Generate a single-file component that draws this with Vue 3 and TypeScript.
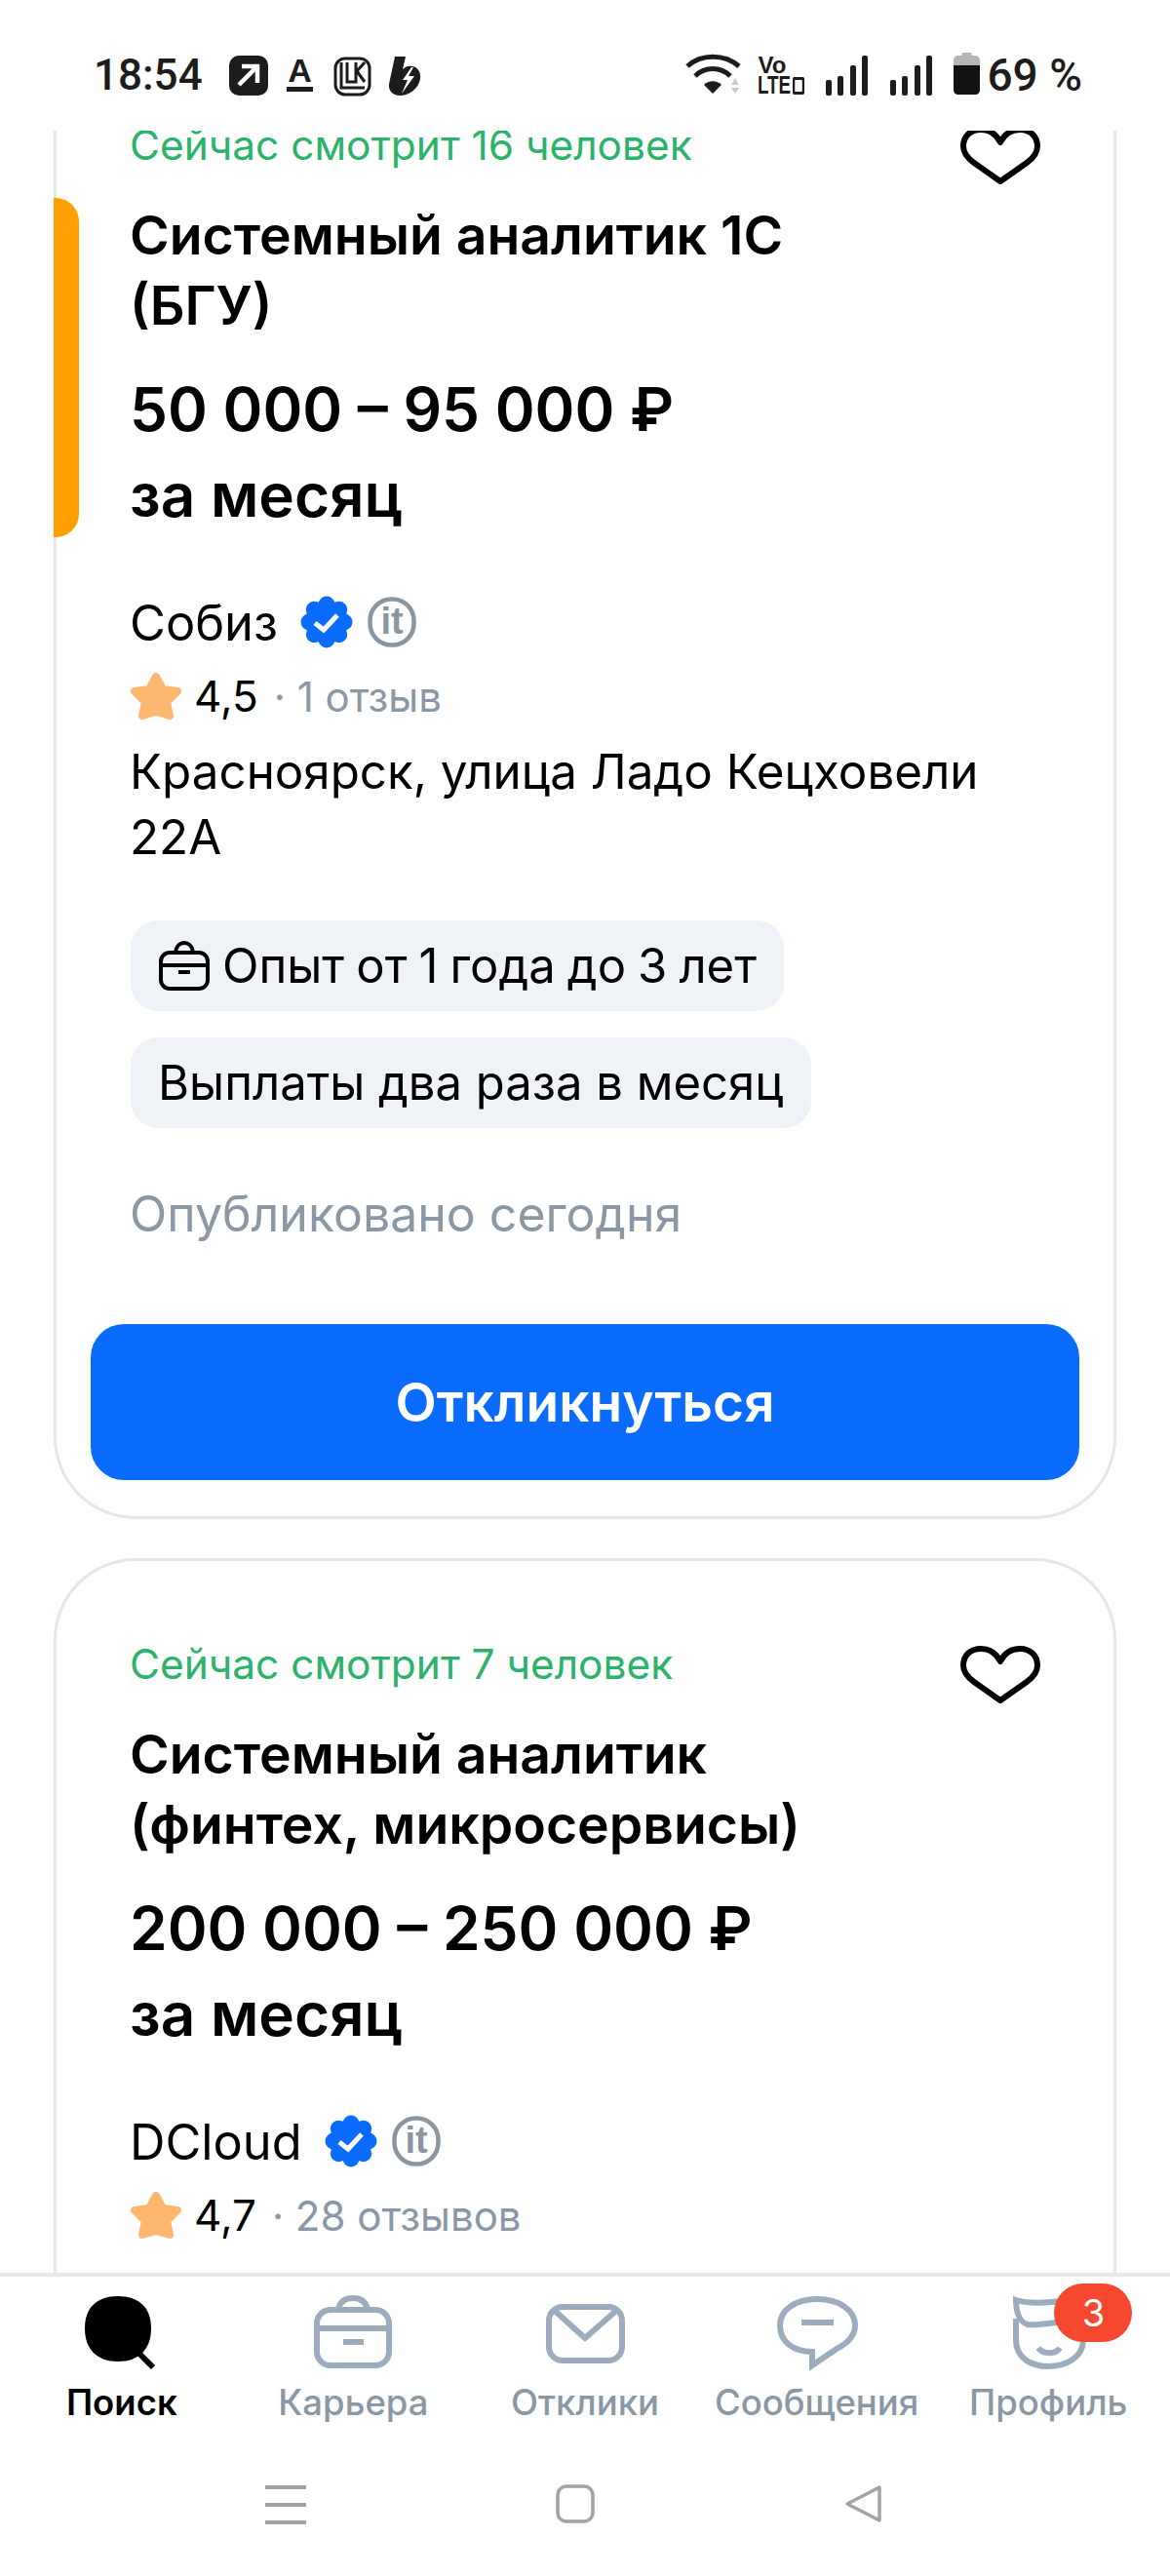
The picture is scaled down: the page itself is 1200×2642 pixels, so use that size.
<template>
  <div class="screen">
    <!-- статус-бар -->
    <header class="status-bar">
      <span class="time">18:54</span>
      <svg class="st-arrow" width="40" height="41" viewBox="0 0 40 41">
        <rect width="40" height="41" rx="10" fill="#1c1c1c" />
        <path d="M10 30 L28 12 M13 11 H29 V28" fill="none" stroke="#fff" stroke-width="4.5" />
      </svg>
      <span class="st-a">A</span>
      <svg class="st-luk" width="39" height="41" viewBox="0 0 39 41">
        <rect x="2" y="2" width="35" height="37" rx="10" fill="none" stroke="#1c1c1c" stroke-width="3" />
        <path d="M8 6 V32 H32 M14 6 V26 H23 V6 M23 16 L32 6 M24 15 L32 26" fill="none" stroke="#1c1c1c" stroke-width="3" />
      </svg>
      <svg class="st-b" width="34" height="41" viewBox="0 0 34 41">
        <path d="M7 0 H18 L15 13 C18 10 22 9 25 10 C31 11 34 17 33 23 C31 33 22 40 12 40 C5 40 0 35 1 28 Z" fill="#1c1c1c" />
        <path d="M24 11 L15 24 H20 L14 38 L27 20 H21 L26 11 Z" fill="#fff" />
      </svg>

      <div class="status-right">
        <svg width="60" height="44" viewBox="0 0 60 44">
          <path d="M2 14 C16 1 40 1 55 14 M10 24 C20 14 36 14 46 24" fill="none" stroke="#1c1c1c" stroke-width="5" />
          <path d="M19 33 C24 28 32 28 37 33 L28 42 Z" fill="#1c1c1c" />
          <path d="M47 33 L51 26 L55 33 Z M47 36 H55 L51 42 Z" fill="#c9c9c9" />
        </svg>
        <div class="st-volte">
          <span class="st-vo">Vo</span>
          <span class="st-lte">LTE<i class="st-lte-box"></i></span>
        </div>
        <svg class="st-signal" width="43" height="41" viewBox="0 0 43 41">
          <rect x="0" y="25" width="6" height="16" rx="2" fill="#1c1c1c" />
          <rect x="12" y="21" width="6" height="20" rx="2" fill="#1c1c1c" />
          <rect x="25" y="10" width="6" height="31" rx="2" fill="#1c1c1c" />
          <rect x="37" y="0" width="6" height="41" rx="2" fill="#1c1c1c" />
        </svg>
        <svg class="st-signal2" width="43" height="41" viewBox="0 0 43 41">
          <rect x="0" y="25" width="6" height="16" rx="2" fill="#1c1c1c" />
          <rect x="12" y="21" width="6" height="20" rx="2" fill="#1c1c1c" />
          <rect x="25" y="10" width="6" height="31" rx="2" fill="#1c1c1c" />
          <rect x="37" y="0" width="6" height="41" rx="2" fill="#1c1c1c" />
        </svg>
        <svg class="st-battery" width="27" height="43" viewBox="0 0 27 43">
          <path d="M9 0 H18 L19 3 H22 C25 3 27 5 27 8 V13 H0 V8 C0 5 2 3 5 3 H8 Z" fill="#b5b5b5" />
          <path d="M0 13 H27 V38 C27 41 25 43 22 43 H5 C2 43 0 41 0 38 Z" fill="#111" />
        </svg>
        <span class="battery-text">69 %</span>
      </div>
    </header>

    <!-- лента вакансий -->
    <main class="feed">
      <article v-for="card in cards" :key="card.id" class="card">
        <div v-if="card.highlighted" class="accent"></div>
        <svg class="heart" width="82" height="60" viewBox="0 0 82 60">
          <path d="M41 56 L14 37 C7 32 3 26 3 20 C3 10 10 3 21 3 C30 3 37 8 41 16 C45 8 52 3 61 3 C72 3 79 10 79 20 C79 26 75 32 68 37 Z" fill="none" stroke="#000" stroke-width="6" stroke-linejoin="round" />
        </svg>
        <div class="watching">{{ card.watching }}</div>
        <h2 class="title">
          <span v-for="line in card.titleLines" :key="line" class="block">{{ line }}</span>
        </h2>
        <div class="salary">
          <span class="block">{{ card.salary }}</span>
          <span class="block">за месяц</span>
        </div>
        <div class="company">
          <span>{{ card.company }}</span>
          <svg class="verified" width="54" height="54" viewBox="0 0 54 54">
            <circle cx="27" cy="27" r="22" fill="#0a6cff" />
            <circle v-for="b in bumps" :key="b.x" :cx="b.x" :cy="b.y" r="8.5" fill="#0a6cff" />
            <path d="M15 28 L24 35 L38 20" fill="none" stroke="#fff" stroke-width="5" />
          </svg>
          <svg class="it" width="50" height="52" viewBox="0 0 50 52">
            <rect x="2.5" y="2.5" width="45" height="47" rx="22" fill="none" stroke="#8a95a0" stroke-width="4.5" />
            <text x="25" y="38" text-anchor="middle" class="it-text">it</text>
          </svg>
        </div>
        <div class="rating">
          <svg width="54" height="50" viewBox="0 0 54 50">
            <path d="M27 5 L34 18 L49 20 L38 31 L41 45 L27 41 L13 45 L16 31 L5 20 L20 18 Z" fill="#fdb76f" stroke="#fdb76f" stroke-width="8" stroke-linejoin="round" />
          </svg>
          <span class="rating-value">{{ card.rating }}</span>
          <span class="rating-reviews">· {{ card.reviews }}</span>
        </div>
        <div v-if="card.address" class="address">
          <span v-for="line in card.address" :key="line" class="block">{{ line }}</span>
        </div>
        <div v-if="card.chips" class="chips">
          <div v-for="chip in card.chips" :key="chip.text" class="chip" :class="{ 'chip-icon': chip.icon }">
            <svg v-if="chip.icon" width="54" height="52" viewBox="0 0 54 52">
              <rect x="3" y="12" width="48" height="37" rx="9" fill="none" stroke="#000" stroke-width="4" />
              <path d="M3 25 H51 M21 32 H33 M18 11 C19 5 23 2 27 2 C31 2 35 5 36 11" fill="none" stroke="#000" stroke-width="4" />
            </svg>
            <span>{{ chip.text }}</span>
          </div>
        </div>
        <div v-if="card.published" class="published">{{ card.published }}</div>
        <button v-if="card.published" class="apply">Откликнуться</button>
      </article>
    </main>

    <!-- нижнее меню -->
    <nav class="tabs">
      <div v-for="tab in tabs" :key="tab.label" class="tab" :class="{ active: tab.active }">
        <svg width="84" height="80" viewBox="0 0 84 80">
          <template v-if="tab.id === 'search'">
            <path d="M38 3 C60 3 72 15 72 36 C72 57 60 70 38 70 C16 70 4 57 4 36 C4 15 16 3 38 3 Z" fill="#000" />
            <path d="M56 58 L74 76" fill="none" stroke="#000" stroke-width="6" />
          </template>
          <g v-else fill="none" stroke="#9dacbd" stroke-width="6">
            <template v-if="tab.id === 'career'">
              <rect x="5" y="17" width="74" height="57" rx="14" />
              <path d="M5 36 H79 M32 50 H53 M27 16 C29 8 35 5 42 5 C49 5 55 8 57 16" />
            </template>
            <template v-if="tab.id === 'replies'">
              <rect x="5" y="14" width="75" height="55" rx="14" />
              <path d="M10 17 L42 46 L75 17" />
            </template>
            <template v-if="tab.id === 'messages'">
              <path d="M42 6 C64 6 81 17 81 33 C81 45 72 52 62 57 L37 74 L37 60 C18 60 4 50 4 33 C4 17 20 6 42 6 Z" />
              <path d="M26 30 H59" />
            </template>
            <template v-if="tab.id === 'profile'">
              <path d="M9 7 C24 12 50 9 76 6 V28 C55 28 32 34 21 32 C13 30 9 20 9 7 Z" />
              <path d="M9 26 V48 C9 66 24 75 42 75 C60 75 78 66 78 48 V30" />
              <path d="M32 56 C37 63 50 63 54 56" />
            </template>
          </g>
        </svg>
        <span class="tab-label">{{ tab.label }}</span>
        <span v-if="tab.badge" class="badge">{{ tab.badge }}</span>
      </div>
    </nav>

    <!-- системная навигация -->
    <footer class="system-nav">
      <svg width="42" height="42" viewBox="0 0 42 42">
        <path d="M0 3 H42 M0 21 H42 M0 39 H42" fill="none" stroke="#a3a3a3" stroke-width="4" />
      </svg>
      <svg width="40" height="40" viewBox="0 0 40 40">
        <rect x="2" y="2" width="36" height="36" rx="9" fill="none" stroke="#a3a3a3" stroke-width="3.5" />
      </svg>
      <svg width="40" height="40" viewBox="0 0 40 40">
        <path d="M36 3 V37 L3 20 Z" fill="none" stroke="#a3a3a3" stroke-width="3.5" stroke-linejoin="round" />
      </svg>
    </footer>
  </div>
</template>

<script setup lang="ts">
interface Chip {
  text: string;
  icon?: boolean;
}

interface Card {
  id: number;
  watching: string;
  titleLines: string[];
  salary: string;
  company: string;
  rating: string;
  reviews: string;
  highlighted?: boolean;
  address?: string[];
  chips?: Chip[];
  published?: string;
}

const cards: Card[] = [
  {
    id: 1,
    watching: 'Сейчас смотрит 16 человек',
    titleLines: ['Системный аналитик 1С', '(БГУ)'],
    salary: '50 000 – 95 000 ₽',
    company: 'Собиз',
    rating: '4,5',
    reviews: '1 отзыв',
    highlighted: true,
    address: ['Красноярск, улица Ладо Кецховели', '22А'],
    chips: [{ text: 'Опыт от 1 года до 3 лет', icon: true }, { text: 'Выплаты два раза в месяц' }],
    published: 'Опубликовано сегодня',
  },
  {
    id: 2,
    watching: 'Сейчас смотрит 7 человек',
    titleLines: ['Системный аналитик', '(финтех, микросервисы)'],
    salary: '200 000 – 250 000 ₽',
    company: 'DCloud',
    rating: '4,7',
    reviews: '28 отзывов',
  },
];

const tabs = [
  { id: 'search', label: 'Поиск', active: true },
  { id: 'career', label: 'Карьера' },
  { id: 'replies', label: 'Отклики' },
  { id: 'messages', label: 'Сообщения' },
  { id: 'profile', label: 'Профиль', badge: 3 },
];

// зубцы значка проверенной компании
const bumps = Array.from({ length: 8 }, (_, i) => {
  const angle = (i * Math.PI) / 4 + Math.PI / 2;
  return { x: 27 + 18 * Math.cos(angle), y: 27 + 18 * Math.sin(angle) };
});
</script>

<style>
html,
body {
  margin: 0;
  background: #fff;
}
</style>

<style scoped>
.screen {
  width: 1200px;
  height: 2642px;
  display: flex;
  flex-direction: column;
  overflow: hidden;
  background: #fff;
  color: #000;
  font-family: Inter, "Liberation Sans", sans-serif;
}

.block {
  display: block;
}

/* статус-бар */
.status-bar {
  height: 134px;
  flex-shrink: 0;
  box-sizing: border-box;
  padding: 54px 90px 0 96px;
  display: flex;
  align-items: flex-start;
  color: #1c1c1c;
}

.time {
  width: 139px;
  font-family: Roboto, sans-serif;
  font-size: 44px;
  line-height: 46px;
  font-weight: 500;
}

.st-arrow {
  margin-top: 3px;
}

.st-a {
  margin: 4px 0 0 19px;
  width: 27px;
  height: 31px;
  border-bottom: 5px solid #1c1c1c;
  font-family: "Liberation Sans", sans-serif;
  font-size: 34px;
  line-height: 29px;
  font-weight: 700;
  text-align: center;
}

.st-luk {
  margin: 4px 0 0 21px;
}

.st-b {
  margin: 4px 0 0 17px;
}

.status-right {
  margin-left: auto;
  display: flex;
  align-items: flex-start;
}

.st-volte {
  margin: 3px 0 0 14px;
  width: 52px;
  display: flex;
  flex-direction: column;
  font-family: "Liberation Sans", sans-serif;
  font-weight: 700;
}

.st-vo {
  font-size: 24px;
  line-height: 20px;
}

.st-lte {
  display: flex;
  align-items: center;
  gap: 3px;
  font-size: 25px;
  line-height: 21px;
  transform: scaleX(0.75);
  transform-origin: left center;
}

.st-lte-box {
  flex-shrink: 0;
  width: 10px;
  height: 12px;
  border: 3px solid #1c1c1c;
  border-radius: 2px;
}

.st-signal {
  margin: 3px 0 0 18px;
}

.st-signal2 {
  margin: 3px 0 0 23px;
}

.st-battery {
  margin: 0 0 0 22px;
}

.battery-text {
  margin-left: 7px;
  font-family: Roboto, sans-serif;
  font-size: 46px;
  line-height: 46px;
  font-weight: 500;
}

/* лента */
.feed {
  flex: 1;
  min-height: 0;
  overflow: hidden;
  padding: 0 55px;
  display: flex;
  flex-direction: column;
  gap: 40px;
}

.card {
  position: relative;
  flex-shrink: 0;
  box-sizing: border-box;
  min-height: 1000px;
  padding: 81px 77px 37px 75px;
  border: 3px solid #e4e7ea;
  border-radius: 84px;
}

.card:first-child {
  margin-top: -94px;
}

.accent {
  position: absolute;
  left: -3px;
  top: 160px;
  width: 26px;
  height: 348px;
  background: #ff9f00;
  border-radius: 0 24px 24px 0;
}

.heart {
  position: absolute;
  top: 87px;
  right: 75px;
}

.watching {
  font-size: 42.4px;
  line-height: 50px;
  color: #2bb26b;
}

.title {
  margin: 31px 0 0;
  font-size: 55.3px;
  line-height: 72px;
  font-weight: 600;
}

.salary {
  margin-top: 27px;
  font-size: 62px;
  line-height: 88px;
  font-weight: 600;
}

.company {
  margin-top: 56px;
  display: flex;
  align-items: center;
  height: 60px;
  font-size: 50.5px;
}

.verified {
  margin-left: 23px;
}

.it {
  margin-left: 15px;
}

.it-text {
  font-family: "Liberation Sans", sans-serif;
  font-size: 38px;
  font-weight: 700;
  fill: #8a95a0;
}

.rating {
  margin: 18px 0 0 0;
  height: 56px;
  display: flex;
  align-items: center;
  font-size: 42px;
}

.rating-value {
  margin-left: 12px;
  font-size: 44px;
}

.rating-reviews {
  margin-left: 16px;
  color: #8a97a5;
}

.address {
  margin-top: 16px;
  font-size: 49.3px;
  line-height: 67px;
}

.chips {
  margin: 52px 0 0 1px;
  display: flex;
  flex-direction: column;
  align-items: flex-start;
  gap: 27px;
}

.chip {
  height: 93px;
  box-sizing: border-box;
  padding: 0 28px;
  display: flex;
  align-items: center;
  gap: 12px;
  background: #eff2f7;
  border-radius: 28px;
  font-size: 49px;
}

.chip-icon {
  word-spacing: -1.7px;
}

.published {
  margin-top: 58px;
  font-size: 50px;
  line-height: 60px;
  color: #8a97a5;
}

.apply {
  display: block;
  margin: 83px 0 0 -40px;
  width: 1014px;
  height: 160px;
  border: none;
  border-radius: 34px;
  background: #0a6cff;
  color: #fff;
  font-family: inherit;
  font-size: 55px;
  font-weight: 600;
}

/* нижнее меню */
.tabs {
  flex-shrink: 0;
  height: 175px;
  box-sizing: border-box;
  padding: 17px 6px 0;
  border-top: 4px solid #e6e8eb;
  display: grid;
  grid-template-columns: repeat(5, 1fr);
  background: #fff;
}

.tab {
  position: relative;
  display: flex;
  flex-direction: column;
  align-items: center;
}

.tab-label {
  margin-top: 10px;
  font-size: 36.5px;
  line-height: 44px;
  font-weight: 500;
  color: #8a98a6;
  white-space: nowrap;
}

.tab.active .tab-label {
  color: #000;
  font-weight: 600;
}

.badge {
  position: absolute;
  left: 125px;
  top: -10px;
  width: 80px;
  height: 60px;
  border-radius: 30px;
  background: #f5482f;
  color: #fff;
  font-size: 38px;
  line-height: 60px;
  text-align: center;
}

/* системная навигация */
.system-nav {
  flex-shrink: 0;
  height: 136px;
  box-sizing: border-box;
  padding: 42px 294px 0 272px;
  display: flex;
  justify-content: space-between;
  align-items: flex-start;
  background: #fff;
}
</style>
